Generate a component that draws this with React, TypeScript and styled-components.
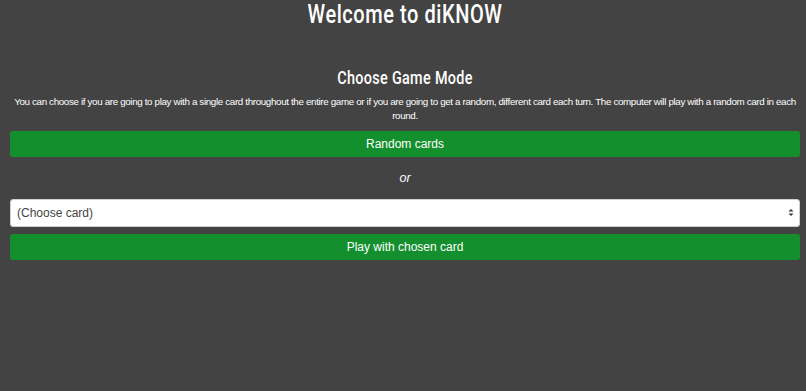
import React from 'react'
import styled, { createGlobalStyle } from 'styled-components'

const GlobalStyle = createGlobalStyle`
    html, body {
        margin: 0;
        padding: 0;
        background: #434343;
        height: 100%;
    }
    body {
        font-family: "Liberation Sans", Arial, sans-serif;
        color: #ffffff;
    }
`

const Page = styled.div`
    padding: 0 6px 0 10px;
    display: flex;
    flex-direction: column;
    align-items: stretch;
`

const Title = styled.h1`
    margin: 0;
    padding-top: 1px;
    font-family: Roboto, sans-serif;
    font-weight: 500;
    font-size: 25px;
    line-height: 27px;
    text-align: center;
    letter-spacing: 0.7px;
    transform: scaleX(0.8);
`

const SubTitle = styled.h2`
    margin: 41px 0 0;
    font-family: Roboto, sans-serif;
    font-weight: 500;
    font-size: 18px;
    line-height: 18px;
    text-align: center;
    letter-spacing: 0.4px;
    transform: scaleX(0.8);
`

const Info = styled.p`
    margin: 8px 0 0;
    font-size: 9.8px;
    line-height: 14px;
    letter-spacing: -0.35px;
    text-align: center;
`

const GreenButton = styled.button`
    display: block;
    width: 100%;
    height: 26px;
    margin-top: ${p => p.$top}px;
    border: none;
    border-radius: 3px;
    background: #138f2e;
    color: #ffffff;
    font-family: "Liberation Sans", Arial, sans-serif;
    font-size: 12px;
    cursor: pointer;
`

const Or = styled.div`
    margin-top: 14px;
    font-style: italic;
    font-size: 12.5px;
    line-height: 15px;
    text-align: center;
`

const SelectWrap = styled.div`
    position: relative;
    margin-top: 13px;
`

const Select = styled.select`
    display: block;
    width: 100%;
    height: 28px;
    padding: 0 20px 0 6px;
    border: 1px solid #cfcfcf;
    border-radius: 3px;
    background: #ffffff;
    color: #444444;
    font-family: "Liberation Sans", Arial, sans-serif;
    font-size: 12px;
    appearance: none;
    -webkit-appearance: none;
`

const Arrows = styled.svg`
    position: absolute;
    right: 6px;
    top: 9px;
    pointer-events: none;
`

export default function App() {
    return (
        <>
            <GlobalStyle />
            <Page>
                <Title>Welcome to diKNOW</Title>
                <SubTitle>Choose Game Mode</SubTitle>
                <Info>
                    You can choose if you are going to play with a single card throughout the entire game or if you are going to get a random, different card each turn. The computer will play with a random card in each round.
                </Info>
                <GreenButton $top={8}>Random cards</GreenButton>
                <Or>or</Or>
                <SelectWrap>
                    <Select defaultValue="">
                        <option value="">(Choose card)</option>
                    </Select>
                    <Arrows width="6" height="9" viewBox="0 0 6 9">
                        <path d="M0.5 3.5 L3 1 L5.5 3.5 Z" fill="#333" />
                        <path d="M0.5 5.5 L3 8 L5.5 5.5 Z" fill="#333" />
                    </Arrows>
                </SelectWrap>
                <GreenButton $top={7}>Play with chosen card</GreenButton>
            </Page>
        </>
    )
}
